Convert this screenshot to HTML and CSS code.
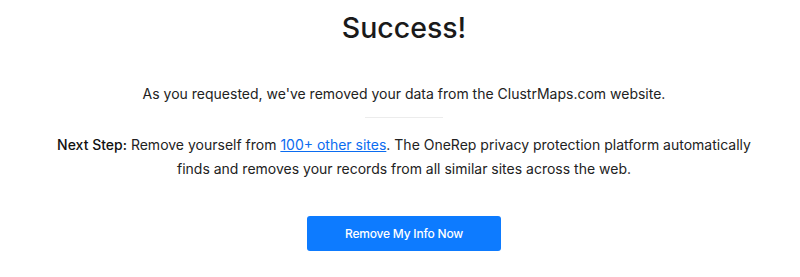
FILE: index.html
```html
<!DOCTYPE html>
<html>
<head>
<meta charset="utf-8">
<link rel="stylesheet" href="styles.css">
</head>
<body>
<main class="page">
  <h1 class="title">Success!</h1>
  <p class="lead">As you requested, we've removed your data from the ClustrMaps.com website.</p>
  <hr class="divider">
  <p class="next"><span class="strong">Next Step:</span> Remove yourself from <a href="#" class="link">100+ other sites</a>. The OneRep privacy protection platform automatically finds and removes your records from all similar sites across the web.</p>
  <div class="actions"><a href="#" class="btn">Remove My Info Now</a></div>
</main>
</body>
</html>
```
FILE: styles.css
```css
html, body { margin: 0; padding: 0; background: #fff; }
body { font-family: Inter, "Noto Sans", sans-serif; color: #222; }
.page {
  display: flex;
  flex-direction: column;
  align-items: center;
  padding: 10px 0 0 8px;
  text-align: center;
}
.title {
  margin: 0;
  font-size: 28.5px;
  font-weight: 500;
  line-height: 36px;
  color: #1a1a1a;
}
.lead {
  margin: 37px 0 0;
  font-size: 14px;
  line-height: 22px;
}
.divider {
  width: 78px;
  border: 0;
  height: 1px;
  background: #ececec;
  margin: 12px 0 0;
}
.next {
  margin: 15px 0 0;
  font-size: 14px;
  line-height: 24px;
  max-width: 712px;
}
.strong { font-weight: 500; color: #111; }
.link { color: #0b6cf0; text-decoration: underline; }
.actions { margin-top: 35px; }
.btn {
  display: inline-flex;
  align-items: center;
  justify-content: center;
  width: 194px;
  height: 35px;
  border-radius: 3px;
  background: #0d7bff;
  color: #fff;
  font-size: 12px;
  font-weight: 500;
  letter-spacing: -0.2px;
  text-decoration: none;
}
```
